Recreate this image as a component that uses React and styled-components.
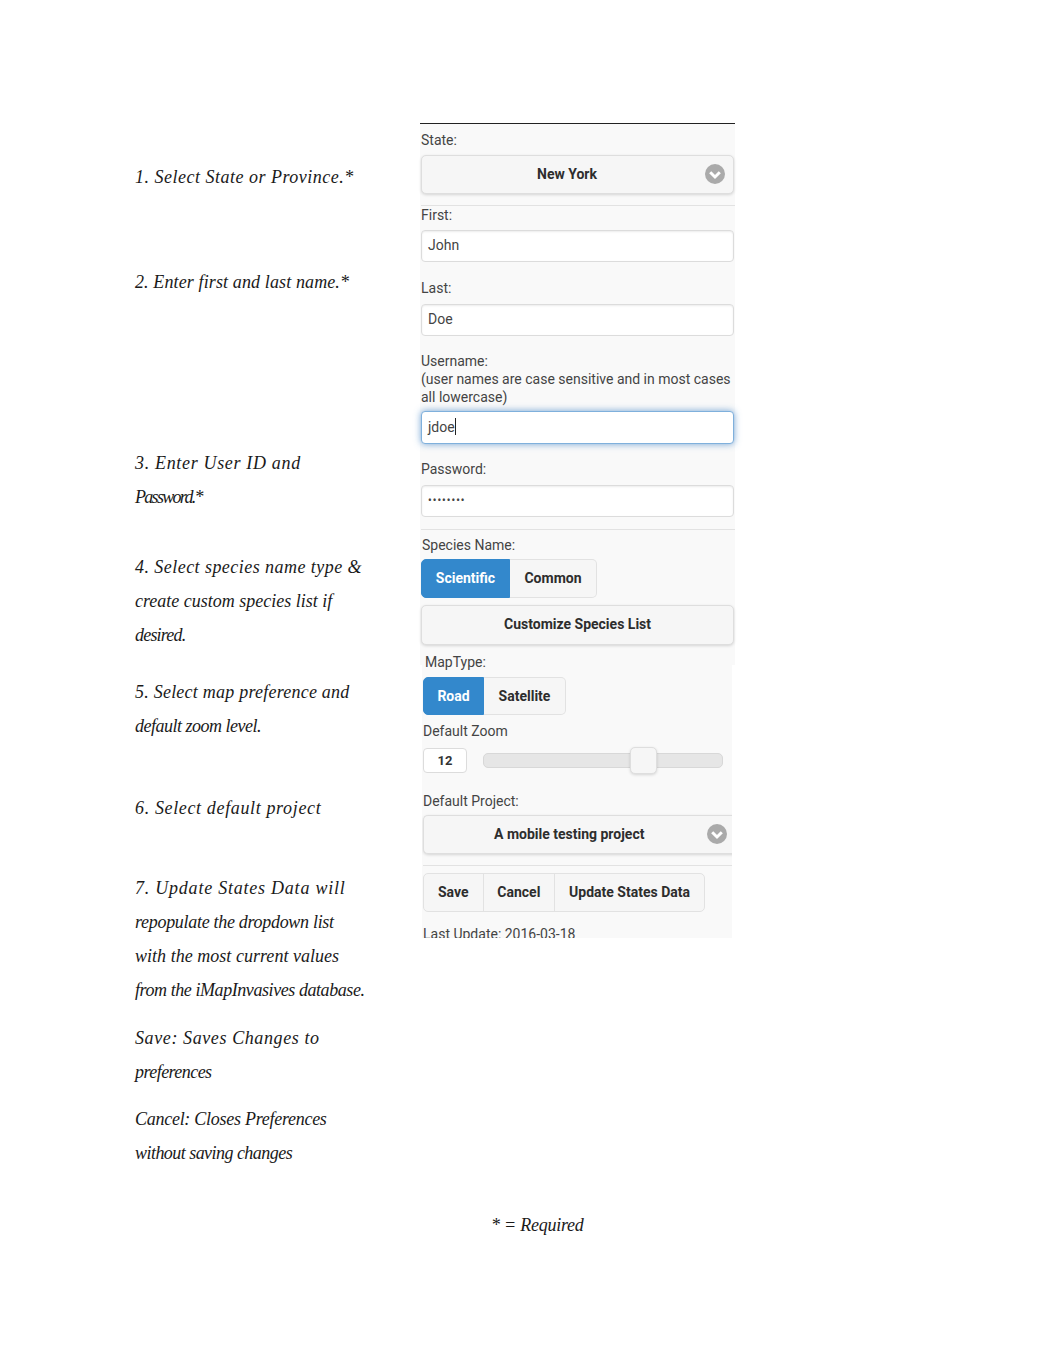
import React from "react";
import styled, { createGlobalStyle } from "styled-components";

const GlobalStyle = createGlobalStyle`
  html, body {
    margin: 0;
    padding: 0;
    background: #fff;
  }
  * {
    box-sizing: border-box;
  }
`;

const notes = [
  { gap: 160, lines: [["1. Select State or Province.*", 0.5]] },
  { gap: 71, lines: [["2. Enter first and last name.*", 0.12]] },
  { gap: 147, lines: [["3. Enter User ID and", 0.67], ["Password.*", -1.7]] },
  {
    gap: 36,
    lines: [
      ["4. Select species name type &", 0.45],
      ["create custom species list if", 0],
      ["desired.", -0.8],
    ],
  },
  { gap: 23, lines: [["5. Select map preference and", 0.23], ["default zoom level.", -0.5]] },
  { gap: 48, lines: [["6. Select default project", 0.64]] },
  {
    gap: 46,
    lines: [
      ["7. Update States Data will", 0.77],
      ["repopulate the dropdown list", -0.3],
      ["with the most current values", 0.03],
      ["from the iMapInvasives database.", -0.43],
    ],
  },
  { gap: 14, lines: [["Save: Saves Changes to", 0.6], ["preferences", -0.55]] },
  { gap: 13, lines: [["Cancel: Closes Preferences", -0.27], ["without saving changes", -0.54]] },
];

function Chevron() {
  return (
    <ChevronIcon viewBox="0 0 20 20">
      <circle cx="10" cy="10" r="10" fill="#aaaaaa" />
      <path d="M5.2 8.3 L10 13 L14.8 8.3" fill="none" stroke="#fff" strokeWidth="3" />
    </ChevronIcon>
  );
}

export default function App() {
  return (
    <Page>
      <GlobalStyle />
      <Columns>
        <Notes>
          {notes.map((note) => (
            <Note key={note.lines[0][0]} $gap={note.gap}>
              {note.lines.map(([text, track]) => (
                <NoteLine key={text} $track={track}>
                  {text}
                </NoteLine>
              ))}
            </Note>
          ))}
          <RequiredNote>* = Required</RequiredNote>
        </Notes>
        <Screens>
          <TopScreen>
            <Label $top={7}>State:</Label>
            <SelectButton $top={5}>
              New York
              <Chevron />
            </SelectButton>
            <Divider $top={11} />
            <Label $top={0}>First:</Label>
            <Field $top={5}>John</Field>
            <Label $top={17}>Last:</Label>
            <Field $top={6}>Doe</Field>
            <Label $top={16}>
              Username:
              <br />
              (user names are case sensitive and in most cases
              <br />
              all lowercase)
            </Label>
            <Field $top={4} $focused>
              jdoe
              <Caret />
            </Field>
            <Label $top={16}>Password:</Label>
            <Field $top={6}>
              <Dots>••••••••</Dots>
            </Field>
            <Divider $top={12} />
            <IndentLabel $top={6}>Species Name:</IndentLabel>
            <Segmented $top={4}>
              <Segment $active $raised $width={89}>
                Scientific
              </Segment>
              <Segment $raised $width={87}>
                Common
              </Segment>
            </Segmented>
            <WideButton>Customize Species List</WideButton>
            <MapLabel $top={8}>MapType:</MapLabel>
          </TopScreen>
          <BottomScreen>
            <Segmented $top={12} $height={38}>
              <Segment $active $width={61}>
                Road
              </Segment>
              <Segment $width={82}>Satellite</Segment>
            </Segmented>
            <Label $top={7}>Default Zoom</Label>
            <ZoomRow>
              <ZoomValue>12</ZoomValue>
              <Track>
                <Handle />
              </Track>
            </ZoomRow>
            <Label $top={18}>Default Project:</Label>
            <ProjectSelect>
              <ProjectName>A mobile testing project</ProjectName>
              <Chevron />
            </ProjectSelect>
            <Divider $top={11} />
            <ActionGroup>
              <Action $width={60}>Save</Action>
              <Action $width={72}>Cancel</Action>
              <Action $width={150}>Update States Data</Action>
            </ActionGroup>
            <Label $top={13}>Last Update: 2016-03-18</Label>
          </BottomScreen>
        </Screens>
      </Columns>
    </Page>
  );
}

const Page = styled.div`
  width: 1047px;
  height: 1355px;
  overflow: hidden;
  background: #fff;
  color: #333;
  font-family: Roboto, "Liberation Sans", sans-serif;
`;

const Columns = styled.div`
  display: flex;
  align-items: flex-start;
`;

const Notes = styled.div`
  width: 420px;
  padding-left: 135px;
  flex-shrink: 0;
`;

const Note = styled.div`
  margin-top: ${(props) => props.$gap}px;
`;

const NoteLine = styled.div`
  height: 34px;
  line-height: 34px;
  white-space: nowrap;
  color: #1a1a1a;
  font-family: "Liberation Serif", serif;
  font-style: italic;
  font-size: 18px;
  letter-spacing: ${(props) => props.$track}px;
`;

const RequiredNote = styled(NoteLine)`
  margin-top: 38px;
  margin-left: 356px;
  letter-spacing: -0.25px;
`;

const Screens = styled.div`
  width: 316px;
  margin-top: 123px;
`;

const TopScreen = styled.div`
  width: 315px;
  height: 542px;
  padding-left: 1px;
  background: #f9f9f9;
  border-top: 1px solid #222;
`;

const BottomScreen = styled.div`
  width: 310px;
  height: 273px;
  margin-left: 2px;
  padding-left: 1px;
  overflow: hidden;
  background: #f9f9f9;
`;

const Label = styled.div`
  margin-top: ${(props) => props.$top}px;
  padding-bottom: 1px;
  font-size: 14px;
  line-height: 18px;
  color: #444;
  white-space: nowrap;
`;

const IndentLabel = styled(Label)`
  margin-left: 1px;
`;

const MapLabel = styled(Label)`
  margin-left: 4px;
`;

const SelectButton = styled.div`
  position: relative;
  display: flex;
  align-items: center;
  justify-content: center;
  width: 313px;
  height: 39px;
  margin-top: ${(props) => props.$top}px;
  padding-right: 21px;
  padding-bottom: 2px;
  background: #f6f6f6;
  border: 1px solid #dedede;
  border-radius: 5px;
  box-shadow: 0 1px 3px rgba(0, 0, 0, 0.15);
  font-size: 14px;
  font-weight: 700;
  color: #2d2d2d;
`;

const ProjectSelect = styled(SelectButton)`
  width: 320px;
  margin-top: 4px;
  padding-right: 0;
  justify-content: flex-start;
  padding-left: 70px;
  border-right: none;
`;

const ProjectName = styled.span`
  white-space: nowrap;
`;

const ChevronIcon = styled.svg`
  position: absolute;
  top: 8px;
  right: 8px;
  width: 20px;
  height: 20px;
  ${ProjectSelect} & {
    right: 16px;
  }
`;

const Divider = styled.div`
  height: 1px;
  margin-top: ${(props) => props.$top}px;
  background: #e2e2e2;
`;

const Field = styled.div`
  display: flex;
  align-items: center;
  width: 313px;
  height: ${(props) => (props.$focused ? 33 : 32)}px;
  margin-top: ${(props) => props.$top}px;
  padding-left: 6px;
  padding-bottom: 2px;
  background: #fff;
  border: 1px solid ${(props) => (props.$focused ? "#7fb0dc" : "#dcdcdc")};
  border-radius: 4px;
  box-shadow: ${(props) =>
    props.$focused
      ? "0 0 7px rgba(56, 126, 196, 0.7)"
      : "inset 0 1px 2px rgba(0, 0, 0, 0.08)"};
  font-size: 14px;
  color: #444;
`;

const Caret = styled.span`
  display: inline-block;
  width: 1px;
  height: 17px;
  background: #222;
`;

const Dots = styled.span`
  font-size: 10px;
  letter-spacing: 1.1px;
  font-weight: 700;
`;

const Segmented = styled.div`
  display: flex;
  height: ${(props) => props.$height || 39}px;
  margin-top: ${(props) => props.$top}px;
`;

const Segment = styled.div`
  display: flex;
  align-items: center;
  justify-content: center;
  width: ${(props) => props.$width}px;
  padding-bottom: ${(props) => (props.$raised ? 2 : 0)}px;
  background: ${(props) => (props.$active ? "#3388cc" : "#f6f6f6")};
  color: ${(props) => (props.$active ? "#fff" : "#2d2d2d")};
  border: 1px solid ${(props) => (props.$active ? "#3388cc" : "#e2e2e2")};
  border-left: ${(props) => (props.$active ? undefined : "none")};
  border-radius: ${(props) => (props.$active ? "5px 0 0 5px" : "0 5px 5px 0")};
  font-size: 14px;
  font-weight: 700;
`;

const WideButton = styled.div`
  display: flex;
  align-items: center;
  justify-content: center;
  width: 313px;
  height: 40px;
  margin-top: 7px;
  padding-bottom: 2px;
  background: #f6f6f6;
  border: 1px solid #dedede;
  border-radius: 5px;
  box-shadow: 0 1px 3px rgba(0, 0, 0, 0.15);
  font-size: 14px;
  font-weight: 700;
  color: #2d2d2d;
`;

const ZoomRow = styled.div`
  display: flex;
  align-items: center;
  margin-top: 6px;
  height: 27px;
`;

const ZoomValue = styled.div`
  display: flex;
  align-items: center;
  justify-content: center;
  width: 44px;
  height: 25px;
  background: #fff;
  border: 1px solid #dcdcdc;
  border-radius: 4px;
  font-size: 13px;
  font-weight: 700;
  color: #333;
`;

const Track = styled.div`
  position: relative;
  width: 240px;
  height: 15px;
  margin-left: 16px;
  background: #e6e6e6;
  border: 1px solid #d8d8d8;
  border-radius: 5px;
`;

const Handle = styled.div`
  position: absolute;
  top: -7px;
  left: 146px;
  width: 27px;
  height: 27px;
  background: #f6f6f6;
  border: 1px solid #dedede;
  border-radius: 5px;
  box-shadow: 0 1px 3px rgba(0, 0, 0, 0.15);
`;

const ActionGroup = styled.div`
  display: flex;
  width: 282px;
  height: 39px;
  margin-top: 7px;
  background: #f6f6f6;
  border: 1px solid #e2e2e2;
  border-radius: 5px;
`;

const Action = styled.div`
  display: flex;
  align-items: center;
  justify-content: center;
  width: ${(props) => props.$width}px;
  padding-bottom: 1px;
  border-right: 1px solid #e2e2e2;
  font-size: 14px;
  font-weight: 700;
  color: #2d2d2d;
  &:last-child {
    border-right: none;
  }
`;
